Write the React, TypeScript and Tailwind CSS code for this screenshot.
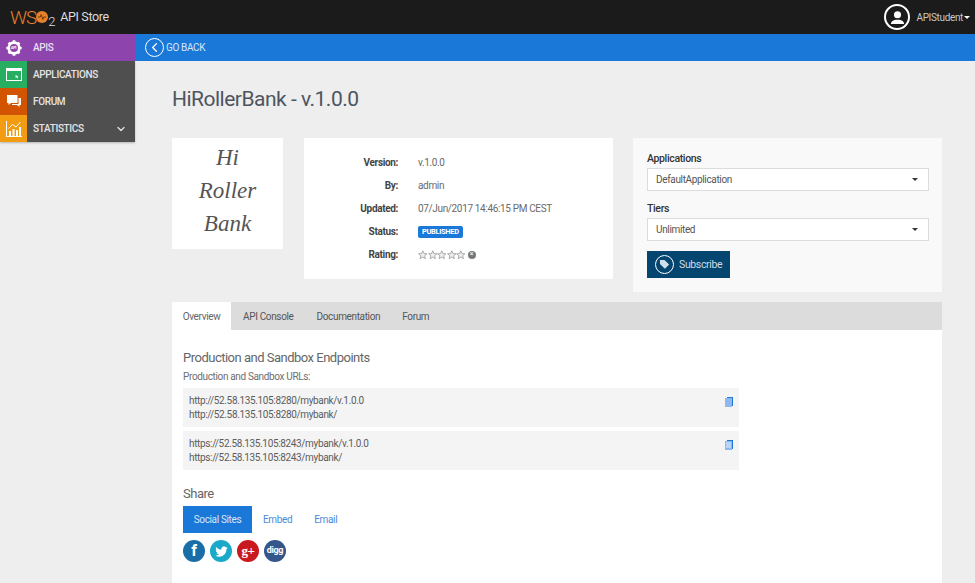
import { ChevronDown, ChevronLeft } from 'lucide-react';

const infoRows = [
  { label: 'Version:', value: 'v.1.0.0' },
  { label: 'By:', value: 'admin' },
  { label: 'Updated:', value: '07/Jun/2017 14:46:15 PM CEST' },
];

function Star() {
  return (
    <svg viewBox="0 0 24 24" className="h-[9.5px] w-[9.5px]" fill="#eee" stroke="#999" strokeWidth="2">
      <path d="M12 2l3 7 7.5.6-5.7 4.9 1.8 7.4L12 18l-6.6 3.9 1.8-7.4L1.5 9.6 9 9z" />
    </svg>
  );
}

function GearIcon() {
  return (
    <span className="relative flex h-[16px] w-[16px] items-center justify-center">
      <svg viewBox="0 0 24 24" className="absolute inset-0" fill="none" stroke="#fff">
        <circle cx="12" cy="12" r="8" strokeWidth="4" />
        <path strokeWidth="4" d="M12 0.5v4M12 19.5v4M0.5 12h4M19.5 12h4M3.9 3.9l2.8 2.8M17.3 17.3l2.8 2.8M3.9 20.1l2.8-2.8M17.3 6.7l2.8-2.8" />
      </svg>
      <span className="relative text-[4px] leading-none font-bold text-white">API</span>
    </span>
  );
}

function AppIcon() {
  return (
    <svg viewBox="0 0 16 13" className="h-[13px] w-[16px]">
      <rect width="16" height="13" fill="#fff" />
      <rect x="1" y="3" width="14" height="9" fill="#27ae60" />
      <path d="M9.5 7l3 1.5-1.2.4.8 1.2-.7.4-.7-1.2-1 .8z" fill="#fff" />
    </svg>
  );
}

function ChatIcon() {
  return (
    <svg viewBox="0 0 16 15" className="h-[15px] w-[16px]" fill="#fff">
      <path d="M1 1h10.5v8H5l-2.5 2V9H1z" />
      <path d="M12.5 4H15v7h-1.5v2l-2.5-2H6v-1h6.5z" />
    </svg>
  );
}

function StatsIcon() {
  return (
    <svg viewBox="0 0 16 16" className="h-[16px] w-[16px]" fill="#fff">
      <rect x="0" y="0" width="1" height="16" />
      <rect x="0" y="15" width="16" height="1" />
      <rect x="3" y="10" width="2" height="5" />
      <rect x="6.5" y="8" width="2" height="7" />
      <rect x="10" y="9" width="2" height="6" />
      <rect x="13" y="6" width="2" height="9" />
      <path d="M2.5 7.5L6.5 3.5l3.5 2.5 4.5-5" fill="none" stroke="#fff" strokeWidth="1" />
    </svg>
  );
}

function ClipIcon({ lined }: { lined?: boolean }) {
  return (
    <svg viewBox="0 0 8 10" className="absolute right-[6px] top-[9px] h-[10px] w-[8px]">
      <rect x="2" y="0" width="6" height="9" fill="#1a78d8" />
      <rect x="0" y="1" width="7" height="9" fill="#8fb8ee" />
      {lined ? <path d="M1 3h5M1 5h5M1 7h5" stroke="#fff" strokeWidth="0.8" /> : null}
    </svg>
  );
}

function NavItem({ color, icon, label, chevron }: { color: string; icon: React.ReactNode; label: string; chevron?: boolean }) {
  return (
    <div className="flex h-[27px] items-center">
      <div className={`flex h-full w-[27px] items-center justify-center ${color}`}>{icon}</div>
      <span className="ml-[6px] flex-1 text-[10px] font-medium text-[#e4e4e4]">{label}</span>
      {chevron ? <ChevronDown size={12} strokeWidth={2.5} className="mr-[8px] text-[#e4e4e4]" /> : null}
    </div>
  );
}

function EndpointBox({ lines, lined }: { lines: string[]; lined?: boolean }) {
  return (
    <div className="relative h-[39px] w-[556px] bg-[#f4f4f4] px-[6px] pt-[6px] text-[10px] leading-[13.5px] text-[#5c5c5c]">
      {lines.map((l) => (
        <div key={l}>{l}</div>
      ))}
      <ClipIcon lined={lined} />
    </div>
  );
}

function SelectBox({ value }: { value: string }) {
  return (
    <div className="mt-[3px] flex h-[23px] items-center justify-between border border-[#dcdcdc] bg-white pl-[8px] pr-[10px] text-[10px] text-[#555]">
      {value}
      <span className="h-0 w-0 border-x-[3px] border-t-[3px] border-x-transparent border-t-[#333]" />
    </div>
  );
}

export default function App() {
  return (
    <div className="h-[583px] w-[975px] overflow-hidden bg-[#eeeeee] font-['Roboto',sans-serif] tracking-[-0.35px]">
      <header className="flex h-[34px] items-center justify-between bg-[#1b1b1b]">
        <div className="flex items-center pl-[10px]">
          <span className="text-[19px] leading-none font-light tracking-[-1px] text-[#e8822a]">WS</span>
          <span className="relative flex h-[12px] w-[12px] items-center justify-center rounded-full bg-[#e8822a]">
            <svg viewBox="0 0 12 12" className="h-[10px] w-[10px]" fill="none" stroke="#5a2a00" strokeWidth="1">
              <path d="M1 6h3l1-3 2 6 1-3h3" />
            </svg>
          </span>
          <span className="mt-[9px] text-[13px] leading-none font-light text-[#ddd]">2</span>
          <span className="ml-[5px] text-[12.5px] text-[#dcdcdc]">API Store</span>
        </div>
        <div className="flex items-center pr-[5px]">
          <span className="flex h-[26px] w-[26px] items-end justify-center overflow-hidden rounded-full border-2 border-white">
            <svg viewBox="0 0 16 16" className="mb-[3px] h-[15px] w-[15px]" fill="#fff">
              <circle cx="8" cy="5" r="3.8" />
              <path d="M1 15c0-3 3-4 5-4.5h4c2 .5 5 1.5 5 4.5z" />
            </svg>
          </span>
          <span className="ml-[6px] text-[10px] text-[#c8c8c8]">APIStudent</span>
          <span className="ml-[1px] h-0 w-0 border-x-[3px] border-t-[3px] border-x-transparent border-t-white" />
        </div>
      </header>

      <div className="flex">
        <aside className="w-[135px] shrink-0">
          <div className="flex h-[27px] items-center bg-[#8e44ad]">
            <div className="flex h-full w-[27px] items-center justify-center">
              <GearIcon />
            </div>
            <span className="ml-[6px] text-[10px] font-medium text-[#e8dff0]">APIS</span>
          </div>
          <div className="bg-[#4f4f4f] shadow-[0_1px_2px_rgba(0,0,0,0.25)]">
            <NavItem color="bg-[#27ae60]" icon={<AppIcon />} label="APPLICATIONS" />
            <NavItem color="bg-[#d35400]" icon={<ChatIcon />} label="FORUM" />
            <NavItem color="bg-[#f39c12]" icon={<StatsIcon />} label="STATISTICS" chevron />
          </div>
        </aside>

        <main className="flex-1">
          <div className="flex h-[27px] items-center bg-[#1a78d8] pl-[10px]">
            <span className="flex h-[19px] w-[19px] items-center justify-center rounded-full border border-white">
              <ChevronLeft size={15} className="text-white" />
            </span>
            <span className="ml-[2px] text-[10px] text-[#d8e6f6]">GO BACK</span>
          </div>

          <div className="pl-[37px] pr-[33px]">
            <h1 className="mt-[25px] h-[27px] text-[21px] leading-[27px] font-normal tracking-[-0.5px] text-[#4d5560]">HiRollerBank - v.1.0.0</h1>

            <div className="mt-[25px] flex items-start">
              <div className="flex h-[111px] w-[111px] flex-col items-center justify-center bg-white pb-[6px] font-['Liberation_Serif',serif] text-[23px] leading-[33px] tracking-normal italic text-[#555]">
                <span>Hi</span>
                <span>Roller</span>
                <span>Bank</span>
              </div>

              <div className="ml-[21px] h-[141px] w-[309px] bg-white pt-[13px] text-[10px]">
                {infoRows.map((r) => (
                  <div key={r.label} className="flex h-[23px] items-center">
                    <span className="w-[94px] text-right font-bold text-[#444]">{r.label}</span>
                    <span className="ml-[20px] text-[#6a6a6a]">{r.value}</span>
                  </div>
                ))}
                <div className="flex h-[23px] items-center">
                  <span className="w-[94px] text-right font-bold text-[#444]">Status:</span>
                  <span className="ml-[20px] rounded-[2px] bg-[#1a78d8] px-[4px] text-[7.5px] leading-[12px] font-bold text-white">PUBLISHED</span>
                </div>
                <div className="flex h-[23px] items-center">
                  <span className="w-[94px] text-right font-bold text-[#444]">Rating:</span>
                  <span className="ml-[20px] flex items-center">
                    <Star />
                    <Star />
                    <Star />
                    <Star />
                    <Star />
                    <span className="ml-[2px] flex h-[8px] w-[8px] items-center justify-center rounded-full bg-[#777] text-[7px] leading-none text-white">×</span>
                  </span>
                </div>
              </div>

              <div className="ml-[20px] h-[154px] w-[309px] bg-[#f9f9f9] pl-[14px] pr-[13px] pt-[14px]">
                <div className="text-[10.5px] leading-[13px] font-medium text-[#333]">Applications</div>
                <SelectBox value="DefaultApplication" />
                <div className="mt-[11px] text-[10.5px] leading-[13px] font-medium text-[#333]">Tiers</div>
                <SelectBox value="Unlimited" />
                <div className="mt-[10px] flex h-[27px] w-[83px] items-center bg-[#04466f] pl-[8px]">
                  <span className="flex h-[19px] w-[19px] items-center justify-center rounded-full border-[1.5px] border-white">
                    <svg viewBox="0 0 12 12" className="h-[11px] w-[11px]" fill="#cfe0ec">
                      <path d="M1 1h5l5 5-4.5 4.5-5.5-5z" />
                    </svg>
                  </span>
                  <span className="ml-[5px] text-[10.5px] text-[#cfdce6]">Subscribe</span>
                </div>
              </div>
            </div>

            <div className="mt-[10px] flex h-[28px] w-[770px] items-center bg-[#dcdcdc] text-[10px] text-[#555]">
              <span className="flex h-full w-[59px] items-center justify-center bg-white text-[#666]">Overview</span>
              <span className="ml-[12px]">API Console</span>
              <span className="ml-[23px]">Documentation</span>
              <span className="ml-[22px]">Forum</span>
            </div>

            <div className="h-[300px] w-[770px] bg-white px-[11px]">
              <h2 className="pt-[20px] text-[13px] leading-[15px] font-normal tracking-[-0.5px] text-[#666]">Production and Sandbox Endpoints</h2>
              <p className="mt-[6px] text-[10px] leading-[12px] text-[#6e6e6e]">Production and Sandbox URLs:</p>
              <div className="mt-[5px] flex flex-col gap-[4px]">
                <EndpointBox lines={['http://52.58.135.105:8280/mybank/v.1.0.0', 'http://52.58.135.105:8280/mybank/']} />
                <EndpointBox lined lines={['https://52.58.135.105:8243/mybank/v.1.0.0', 'https://52.58.135.105:8243/mybank/']} />
              </div>

              <h2 className="mt-[16px] text-[13px] leading-[15px] font-normal tracking-[-0.5px] text-[#666]">Share</h2>
              <div className="mt-[5px] flex h-[27px] items-center text-[10px] text-[#4a8ad8]">
                <span className="flex h-full w-[69px] items-center justify-center bg-[#1a78d8] text-[#d8e6f6]">Social Sites</span>
                <span className="ml-[11px]">Embed</span>
                <span className="ml-[22px]">Email</span>
              </div>
              <div className="mt-[7px] flex gap-[5px]">
                <span className="flex h-[22px] w-[22px] items-center justify-center rounded-full bg-[#1a6ea8] text-[16px] font-bold text-white">f</span>
                <span className="flex h-[22px] w-[22px] items-center justify-center rounded-full bg-[#1ba9c9]">
                  <svg viewBox="0 0 24 24" className="h-[15px] w-[15px]" fill="#fff">
                    <path d="M22 5.9c-.7.3-1.5.5-2.4.6.9-.5 1.5-1.3 1.8-2.3-.8.5-1.7.8-2.6 1a4.1 4.1 0 0 0-7 3.7C8.4 8.7 5.4 7.1 3.4 4.6c-1.1 1.9-.5 4.2 1.3 5.5-.7 0-1.3-.2-1.9-.5 0 2 1.4 3.7 3.3 4.1-.6.2-1.2.2-1.9.1.5 1.6 2 2.8 3.900 2.800A8.300 8.300 0 0 1 2 18.300a11.600 11.600 0 0 0 17.900-10.300c.8-.6 1.500-1.300 2.100-2.100z" />
                  </svg>
                </span>
                <span className="flex h-[22px] w-[22px] items-center justify-center rounded-full bg-[#c9191e] font-['Liberation_Serif',serif] text-[13px] font-bold text-white">g+</span>
                <span className="flex h-[22px] w-[22px] items-center justify-center rounded-full bg-[#34568b] text-[9px] font-bold text-white">digg</span>
              </div>
            </div>
          </div>
        </main>
      </div>
    </div>
  );
}
